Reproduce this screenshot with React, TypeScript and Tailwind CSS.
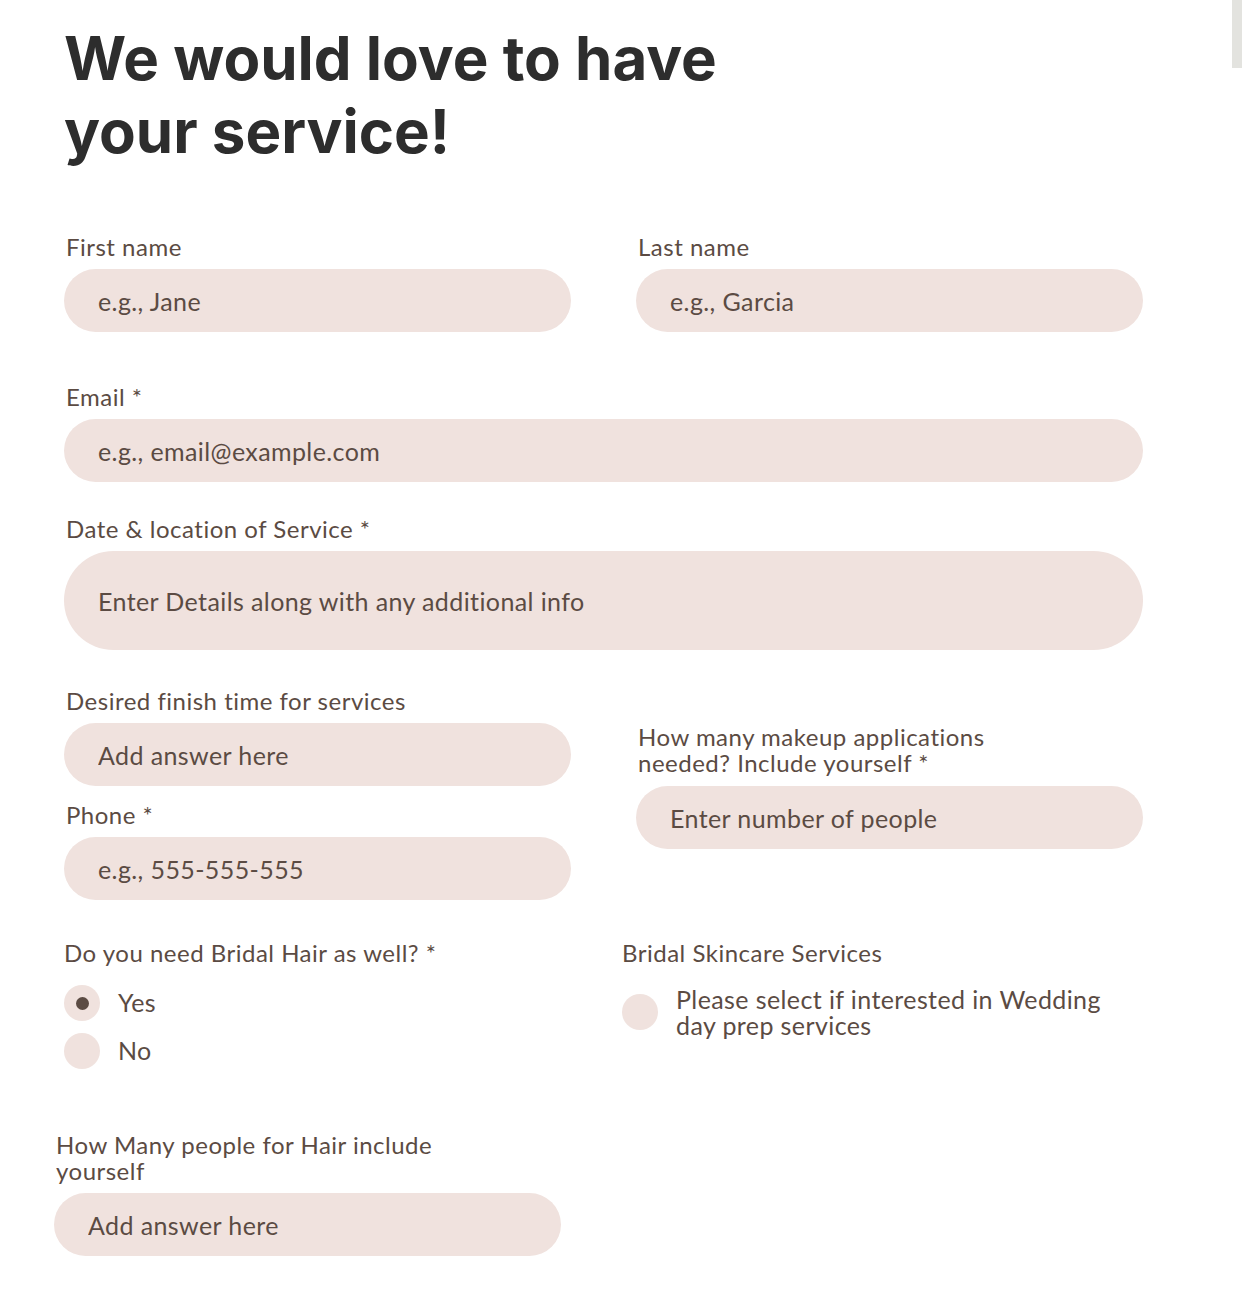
import React from 'react';

const labelCls = "block text-[24px] leading-[26px] tracking-[0.5px] text-[#5b4b43]";
const inputCls =
  "w-full h-[63px] rounded-full bg-[#f0e2de] pl-[34px] pr-6 text-[25px] tracking-[0.4px] text-[#5b4b43] placeholder:text-[#5b4b43] outline-none";

function Field({ label, placeholder, className = "" }: { label: string; placeholder: string; className?: string }) {
  return (
    <div className={className}>
      <label className={`${labelCls} pl-[2px]`}>{label}</label>
      <input className={`${inputCls} mt-[9px]`} placeholder={placeholder} />
    </div>
  );
}

function Radio({ checked, label }: { checked?: boolean; label: string }) {
  return (
    <div className="flex items-center gap-[18px] h-[36px]">
      <span className="w-[36px] h-[36px] rounded-full bg-[#f0e2de] flex items-center justify-center">
        {checked && <span className="w-[13px] h-[13px] rounded-full bg-[#5b4b43]" />}
      </span>
      <span className="text-[25px] tracking-[0.4px] text-[#5b4b43]">{label}</span>
    </div>
  );
}

export default function App() {
  return (
    <div className="relative min-h-[1300px] bg-white" style={{ fontFamily: 'Lato, "Open Sans", sans-serif' }}>
      <div className="absolute right-0 top-0 w-[10px] h-[68px] bg-[#e3e3df]" />
      <div className="pl-[64px] pt-[22px] w-[1143px]">
        <h1
          className="text-[60px] leading-[73px] font-bold text-[#2d2d2d]"
          style={{ fontFamily: 'Inter, "Open Sans", sans-serif' }}
        >
          We would love to have
          <br />
          your service!
        </h1>

        <div className="mt-[66px] grid grid-cols-2 gap-x-[65px]">
          <Field label="First name" placeholder="e.g., Jane" />
          <Field label="Last name" placeholder="e.g., Garcia" />
        </div>

        <Field label="Email *" placeholder="e.g., email@example.com" className="mt-[52px]" />

        <div className="mt-[34px]">
          <label className={`${labelCls} pl-[2px]`}>Date &amp; location of Service *</label>
          <input
            className="mt-[9px] w-full h-[99px] rounded-full bg-[#f0e2de] pl-[34px] pr-6 text-[25px] tracking-[0.4px] text-[#5b4b43] placeholder:text-[#5b4b43] outline-none"
            placeholder="Enter Details along with any additional info"
          />
        </div>

        <div className="mt-[38px] grid grid-cols-2 gap-x-[65px]">
          <div>
            <Field label="Desired finish time for services" placeholder="Add answer here" />
            <Field label="Phone *" placeholder="e.g., 555-555-555" className="mt-[16px]" />
          </div>
          <div className="pt-[36px]">
            <label className={`${labelCls} pl-[2px] w-[400px]`}>How many makeup applications needed? Include yourself *</label>
            <input className={`${inputCls} mt-[10px]`} placeholder="Enter number of people" />
          </div>
        </div>

        <div className="mt-[40px] flex">
          <div className="w-[558px]">
            <div className="text-[24px] leading-[26px] tracking-[0.5px] text-[#5b4b43]">Do you need Bridal Hair as well? *</div>
            <div className="mt-[19px] flex flex-col gap-[12px]">
              <Radio checked label="Yes" />
              <Radio label="No" />
            </div>
          </div>
          <div>
            <div className="text-[24px] leading-[26px] tracking-[0.5px] text-[#5b4b43]">Bridal Skincare Services</div>
            <div className="mt-[20px] flex items-center gap-[18px]">
              <span className="w-[36px] h-[36px] shrink-0 rounded-full bg-[#f0e2de]" />
              <span className="w-[440px] text-[25px] leading-[26px] tracking-[0.4px] text-[#5b4b43]">
                Please select if interested in Wedding day prep services
              </span>
            </div>
          </div>
        </div>

        <div className="mt-[63px] -ml-[10px] w-[507px]">
          <label className={`${labelCls} pl-[2px] w-[420px]`}>How Many people for Hair include yourself</label>
          <input className={`${inputCls} mt-[9px]`} placeholder="Add answer here" />
        </div>
      </div>
    </div>
  );
}
